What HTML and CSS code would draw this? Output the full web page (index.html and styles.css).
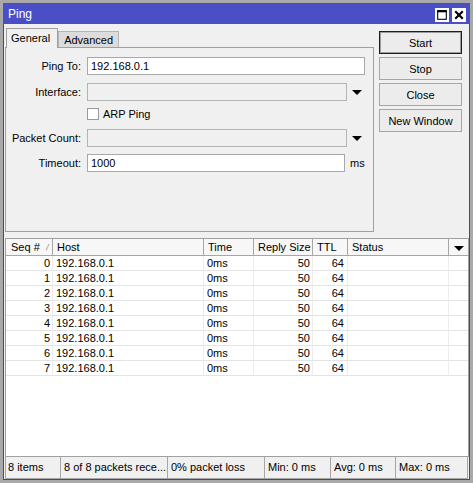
FILE: index.html
```html
<!DOCTYPE html>
<html lang="en">
<head>
<meta charset="UTF-8">
<title>Ping</title>
<link rel="stylesheet" href="styles.css">
</head>
<body>

<div class="frame">
  <!-- title bar -->
  <div class="titlebar">
    <span class="title">Ping</span>
    <div class="wbtns">
      <span class="wbtn"><svg viewBox="0 0 13 13"><rect x="2.5" y="2.5" width="8" height="8" fill="none" stroke="#000"/><line x1="2" y1="3" x2="11" y2="3" stroke="#000" stroke-width="2"/></svg></span>
      <span class="wbtn"><svg viewBox="0 0 13 13"><path d="M3 3 L10 10 M10 3 L3 10" stroke="#000" stroke-width="2"/></svg></span>
    </div>
  </div>

  <div class="main">
    <div class="top">
      <div class="tabbox">
        <div class="tabs">
          <div class="tab active">General</div>
          <div class="tab">Advanced</div>
        </div>
        <div class="panel">
          <div class="row">
            <span class="lbl">Ping To:</span>
            <div class="field w-full">192.168.0.1</div>
          </div>
          <div class="row">
            <span class="lbl">Interface:</span>
            <div class="field w-combo off"></div>
            <span class="arrow"></span>
          </div>
          <div class="row chk-row">
            <span class="lbl"></span>
            <span class="chk"></span>
            <span>ARP Ping</span>
          </div>
          <div class="row">
            <span class="lbl">Packet Count:</span>
            <div class="field w-combo off"></div>
            <span class="arrow"></span>
          </div>
          <div class="row">
            <span class="lbl">Timeout:</span>
            <div class="field w-unit">1000</div>
            <span class="unit">ms</span>
          </div>
        </div>
      </div>

      <div class="actions">
        <button class="btn default">Start</button>
        <button class="btn">Stop</button>
        <button class="btn">Close</button>
        <button class="btn">New Window</button>
      </div>
    </div>

    <!-- results -->
    <div class="list">
      <table>
        <colgroup>
          <col style="width:47px"><col style="width:151px"><col style="width:50px">
          <col style="width:59px"><col style="width:35px"><col style="width:101px"><col>
        </colgroup>
        <thead>
          <tr>
            <th>Seq # <svg class="sort" viewBox="0 0 5 8"><line x1="1" y1="7.5" x2="4" y2="1" stroke="#b8b8b8" stroke-width="1.2"/></svg></th>
            <th>Host</th><th>Time</th><th>Reply Size</th><th>TTL</th><th>Status</th>
            <th class="more"><span class="arrow"></span></th>
          </tr>
        </thead>
        <tbody id="rows"></tbody>
      </table>
    </div>

    <div class="statusbar">
      <div class="cell s1">8 items</div>
      <div class="cell s2">8 of 8 packets rece...</div>
      <div class="cell s3">0% packet loss</div>
      <div class="cell s4">Min: 0 ms</div>
      <div class="cell s5">Avg: 0 ms</div>
      <div class="cell s6">Max: 0 ms</div>
    </div>
  </div>
</div>

<script>
/* ping replies */
const tbody=document.getElementById("rows");
for(let i=0;i<8;i++){
  const tr=document.createElement("tr");
  tr.innerHTML=`<td class="num">${i}</td><td>192.168.0.1</td><td>0ms</td>
    <td class="num">50</td><td class="num ttl">64</td><td></td><td></td>`;
  tbody.appendChild(tr);
}
</script>
</body>
</html>
```

FILE: styles.css
```css
*{box-sizing:border-box;}
html,body{margin:0;background:#a9a9a9;}
body{font:11px "Liberation Sans",Arial,sans-serif;color:#000;}

.frame{width:473px;height:483px;padding:3px;background:#a9a9a9;}

.titlebar{
  height:21px;background:#4a4fc6;color:#fff;
  display:flex;align-items:center;justify-content:space-between;
  padding:0 4px 0 5px;
}
.title{font-size:12px;}
.wbtns{display:flex;gap:3px;padding-top:2px;}
.wbtn{width:14px;height:14px;background:#fff;display:flex;}
.wbtn svg{width:14px;height:14px;}

.main{
  height:456px;background:#f0f0f0;
  border:1px solid #4e4e4e;border-top:0;
  display:flex;flex-direction:column;
}

/* ---- top part ---- */
.top{display:flex;padding-top:4px;}
.tabbox{margin-left:1px;width:369px;}
.tabs{display:flex;height:19px;padding-left:1px;}
.tab{
  height:16px;margin-top:3px;padding:0 5px 0 5px;line-height:16px;
  background:#dcdcdc;border:1px solid #b4b4b4;border-bottom:0;
}
.tab.active{
  height:20px;margin-top:0;line-height:19px;background:#f0f0f0;
  border-color:#a0a0a0;padding:0 7px 0 4px;position:relative;z-index:1;
}
.panel{
  height:185px;border:1px solid #a0a0a0;padding-top:9px;
}
.row{display:flex;align-items:center;height:18px;margin-bottom:8px;}
.row:nth-child(2){margin-bottom:7px;}
.chk-row{height:12px;margin-bottom:9px;}
.row:nth-child(4){margin-bottom:7px;}
.lbl{width:75px;text-align:right;margin-right:6px;}
.field{
  height:18px;background:#fff;border:1px solid #a8a8a8;
  padding:0 3px;line-height:16px;
}
.field.off{background:#f0f0f0;border-color:#b4b4b4;}
.w-full{width:278px;}
.w-combo{width:260px;}
.w-unit{width:258px;}
.arrow{
  width:0;height:0;margin-left:5px;
  border-left:5px solid transparent;border-right:5px solid transparent;border-top:5px solid #000;
}
.unit{margin-left:5px;}
.chk{width:12px;height:12px;background:#fff;border:1px solid #9a9a9a;margin-right:4px;}

.actions{display:flex;flex-direction:column;gap:3px;margin:3px 0 0 5px;}
.btn{
  width:83px;height:23px;font:inherit;color:#000;padding:0;
  background:#ececec;border:1px solid #a6a6a6;
}
.btn.default{border:1px solid #1e1e1e;box-shadow:inset 0 0 0 1px #9c9c9c;}

/* ---- results ---- */
.list{
  margin:6px 0 0 1px;width:464px;height:219px;
  background:#fff;border:1px solid #a0a0a0;
}
table{width:100%;table-layout:fixed;border-spacing:0;}
th{
  height:17px;padding:0 0 0 4px;font-weight:normal;text-align:left;
  background:#f7f7f7;border-right:1px solid #a6a6a6;border-bottom:1px solid #a6a6a6;
  white-space:nowrap;overflow:hidden;
}
th:first-child{padding-left:5px;}
th.more{border-right:0;padding:0;}
th.more .arrow{display:block;margin:2px auto 0;}
.sort{width:5px;height:8px;margin-left:2px;}
td{
  height:14px;line-height:14px;padding:0 0 0 3px;
  border-right:1px solid #ececec;border-bottom:1px solid #e4e4e4;
  white-space:nowrap;
}
td:last-child{border-right:0;}
td.num{text-align:right;padding-right:2px;}
td.ttl{padding-right:3px;}

.statusbar{display:flex;height:22px;margin-left:1px;}
.cell{
  border:1px solid #a6a6a6;border-top:0;margin-left:-1px;
  padding:0 3px;line-height:21px;white-space:nowrap;overflow:hidden;
}
.cell:first-child{margin-left:0;padding-left:2px;}
.s1{width:56px;}
.s2{width:108px;}
.s3{width:98px;}
.s4{width:67px;}
.s5{width:66px;}
.s6{width:73px;}
```
